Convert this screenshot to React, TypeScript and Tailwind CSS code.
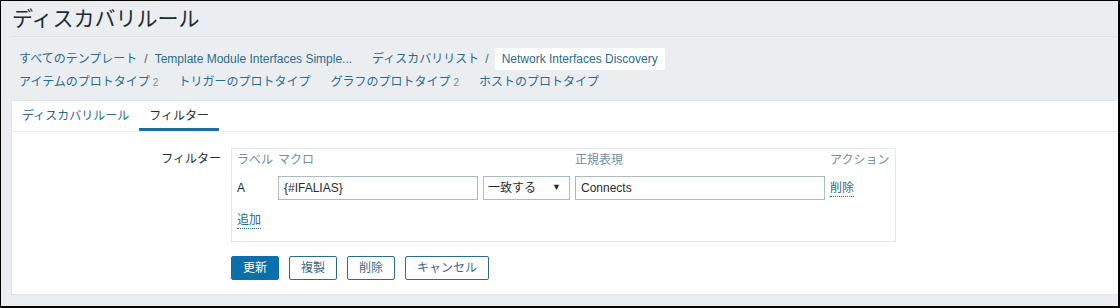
const link = "text-[#2b6a93]";
const dotted = "inline-block leading-[15px] border-b border-dotted border-[#2b6a93] text-[#2b6a93]";

function Crumbs() {
  return (
    <div className="pl-[18px] pt-[11px]">
      <div className="flex h-[22px] items-center">
        <span className={link}>すべてのテンプレート</span>
        <span className="mx-[7px] text-[#4f5a61]">/</span>
        <span className={link}>Template Module Interfaces Simple...</span>
        <span className={`${link} ml-[20px]`}>ディスカバリリスト</span>
        <span className="mx-[6px] text-[#4f5a61]">/</span>
        <span className={`${link} flex h-[22px] items-center rounded-[2px] bg-white px-[7px]`}>Network Interfaces Discovery</span>
      </div>
      <div className="flex h-[23px] items-center gap-[20px]">
        <span className={link}>
          アイテムのプロトタイプ<span className="ml-[3px] text-[10px] text-[#768d99]">2</span>
        </span>
        <span className={link}>トリガーのプロトタイプ</span>
        <span className={link}>
          グラフのプロトタイプ<span className="ml-[3px] text-[10px] text-[#768d99]">2</span>
        </span>
        <span className={link}>ホストのプロトタイプ</span>
      </div>
    </div>
  );
}

function Tabs() {
  return (
    <div className="flex h-[31px] border-b border-[#ebeef0]">
      <div className={`${link} flex items-center px-[10px]`}>ディスカバリルール</div>
      <div className="flex items-center border-b-[3px] border-[#1f6c9c] px-[10px] pt-[3px] text-[#1f2c33]">フィルター</div>
    </div>
  );
}

function FilterBox() {
  return (
    <div className="w-[665px] border border-[#e3e7ea] px-[5px] pb-[12px]">
      <div className="grid h-[21px] grid-cols-[41px_205px_92px_255px_auto] items-center text-[#768d99]">
        <span>ラベル</span>
        <span>マクロ</span>
        <span />
        <span>正規表現</span>
        <span>アクション</span>
      </div>
      <div className="mt-[6px] grid h-[24px] grid-cols-[41px_205px_92px_255px_auto] items-center">
        <span>A</span>
        <div className="flex h-[24px] w-[200px] items-center border border-[#acbbc2] px-[5px]">{"{#IFALIAS}"}</div>
        <div className="flex h-[24px] w-[87px] items-center justify-between border border-[#acbbc2] pl-[4px] pr-[8px]">
          <span>一致する</span>
          <span className="text-[9px]">▼</span>
        </div>
        <div className="flex h-[24px] w-[250px] items-center border border-[#acbbc2] px-[5px]">Connects</div>
        <div>
          <span className={dotted}>削除</span>
        </div>
      </div>
      <div className="mt-[11px]">
        <span className={dotted}>追加</span>
      </div>
    </div>
  );
}

function Buttons() {
  const alt = "flex h-[24px] items-center rounded-[2px] border border-[#2b6a93] bg-white px-[11px] text-[#3a6a88]";
  return (
    <div className="mt-[14px] flex gap-[10px] pl-[219px]">
      <div className="flex h-[24px] items-center rounded-[2px] border border-[#0b6fab] bg-[#0b6fab] px-[11px] text-white">更新</div>
      <div className={alt}>複製</div>
      <div className={alt}>削除</div>
      <div className={alt}>キャンセル</div>
    </div>
  );
}

export default function App() {
  return (
    <div className="h-[308px] w-[1120px] overflow-hidden border-b-2 border-l border-r-2 border-t border-black bg-[#ebeef0] font-['Liberation_Sans','Noto_Sans_CJK_JP',sans-serif] text-[12px] text-[#1f2c33]">
      <div className="ml-[10px] border-b border-[#dce1e4] pb-[5px] pl-[1px] pt-[6px]">
        <h1 className="text-[21px] font-normal leading-[24px]">ディスカバリルール</h1>
      </div>
      <Crumbs />
      <div className="ml-[10px] mt-[7px] border-b border-l border-t border-[#dfe4e7] bg-white pb-[14px]">
        <Tabs />
        <div className="mt-[16px] flex">
          <div className="w-[209px] pr-0 pt-[1px] text-right leading-[21px]">フィルター</div>
          <div className="ml-[10px]">
            <FilterBox />
          </div>
        </div>
        <Buttons />
      </div>
    </div>
  );
}
